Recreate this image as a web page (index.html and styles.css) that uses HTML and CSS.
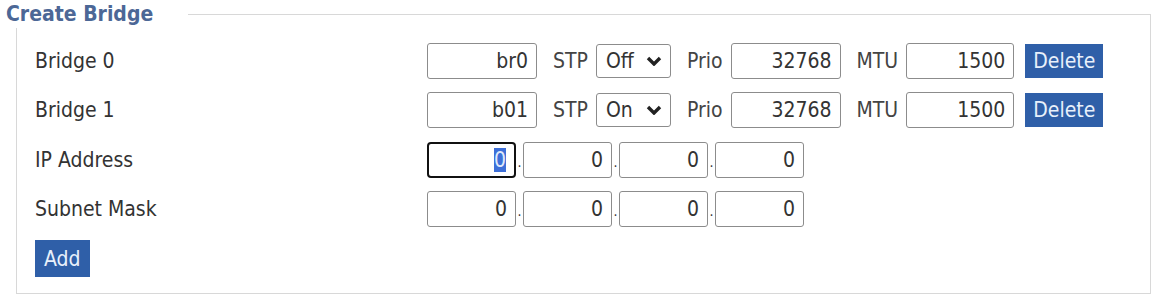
FILE: index.html
```html
<!DOCTYPE html>
<html lang="en">
<head>
    <meta charset="UTF-8">
    <title>Create Bridge</title>
    <link rel="stylesheet" href="styles.css">
</head>
<body>
    <div class="section">
        <div class="section-head">
            <span class="legend">Create Bridge</span>
            <span class="head-line"></span>
        </div>
        <div class="section-body">
            <div class="row">
                <div class="label">Bridge 0</div>
                <div class="controls">
                    <input type="text" class="field name" value="br0">
                    <span class="pair">STP
                        <span class="select">
                            <select><option selected>Off</option><option>On</option></select>
                            <svg class="chevron" width="16" height="10" viewBox="0 0 16 10"><path d="M2 2 L8 8 L14 2" fill="none" stroke="#222" stroke-width="3.4"/></svg>
                        </span>
                    </span>
                    <span class="pair">Prio <input type="text" class="field prio" value="32768"></span>
                    <span class="pair">MTU <input type="text" class="field mtu" value="1500"></span>
                    <button type="button" class="button delete">Delete</button>
                </div>
            </div>
            <div class="row">
                <div class="label">Bridge 1</div>
                <div class="controls">
                    <input type="text" class="field name" value="b01">
                    <span class="pair">STP
                        <span class="select">
                            <select><option>Off</option><option selected>On</option></select>
                            <svg class="chevron" width="16" height="10" viewBox="0 0 16 10"><path d="M2 2 L8 8 L14 2" fill="none" stroke="#222" stroke-width="3.4"/></svg>
                        </span>
                    </span>
                    <span class="pair">Prio <input type="text" class="field prio" value="32768"></span>
                    <span class="pair">MTU <input type="text" class="field mtu" value="1500"></span>
                    <button type="button" class="button delete">Delete</button>
                </div>
            </div>
            <div class="row">
                <div class="label">IP Address</div>
                <div class="controls">
                    <input type="text" class="field ip focused" id="ip0" value="0"><span class="dot">.</span><input type="text" class="field ip" value="0"><span class="dot">.</span><input type="text" class="field ip" value="0"><span class="dot">.</span><input type="text" class="field ip" value="0">
                </div>
            </div>
            <div class="row">
                <div class="label">Subnet Mask</div>
                <div class="controls">
                    <input type="text" class="field ip" value="0"><span class="dot">.</span><input type="text" class="field ip" value="0"><span class="dot">.</span><input type="text" class="field ip" value="0"><span class="dot">.</span><input type="text" class="field ip" value="0">
                </div>
            </div>
            <div class="row">
                <button type="button" class="button add">Add</button>
            </div>
        </div>
    </div>

    <script>
        var ip = document.getElementById('ip0');
        ip.focus();
        ip.select();
    </script>
</body>
</html>
```

FILE: styles.css
```css
body {
    margin: 0;
    background: #fff;
    color: #333;
    font-family: "DejaVu Sans Condensed", "DejaVu Sans", sans-serif;
    font-stretch: condensed;
    font-size: 21px;
}
.section-head {
    display: flex;
    height: 28px;
}
.legend {
    margin-left: 6px;
    padding-right: 35px;
    line-height: 28px;
    font-weight: bold;
    color: #4c6796;
}
.head-line {
    flex: 1;
    margin-top: 14px;
    margin-right: 2px;
    border-top: 1px solid #d8d8d8;
    border-right: 1px solid #d8d8d8;
}
.section-body {
    margin: 0 2px 0 16px;
    padding: 8px 0 9px 18px;
    border: 1px solid #d8d8d8;
    border-top: none;
}
.row {
    display: flex;
    align-items: center;
    height: 49.5px;
}
.label {
    width: 392px;
    color: #333;
}
.controls {
    display: flex;
    align-items: center;
}
.pair {
    display: flex;
    align-items: center;
    gap: 8px;
    margin-left: 16px;
    color: #444;
}
.field {
    box-sizing: border-box;
    height: 36px;
    padding: 0 8px;
    border: 1px solid #8c8c8c;
    border-radius: 3px;
    font: inherit;
    color: #333;
    text-align: right;
    outline: none;
}
.name, .prio {
    width: 110px;
}
.mtu {
    width: 108px;
}
.ip {
    width: 89px;
}
.focused {
    border: 2px solid #111;
    border-radius: 4px;
}
.focused::selection {
    background: #3d6fd8;
    color: #dfe8fa;
}
.dot {
    width: 7px;
    text-align: center;
    font-size: 14px;
    align-self: flex-end;
    margin-bottom: 8px;
}
.select {
    position: relative;
    display: inline-block;
}
.select select {
    appearance: none;
    box-sizing: border-box;
    width: 75px;
    height: 34px;
    padding: 0 0 0 9px;
    border: 1px solid #8c8c8c;
    border-radius: 3px;
    background: #fff;
    font: inherit;
    color: #333;
}
.chevron {
    position: absolute;
    right: 9px;
    top: 12px;
    pointer-events: none;
}
.button {
    height: 34px;
    padding: 0 8px;
    border: none;
    background: #2f5fa8;
    color: #e8f0fb;
    font: inherit;
    cursor: pointer;
}
.delete {
    margin-left: 11px;
}
.add {
    height: 37px;
    padding: 0 9px;
}
```
